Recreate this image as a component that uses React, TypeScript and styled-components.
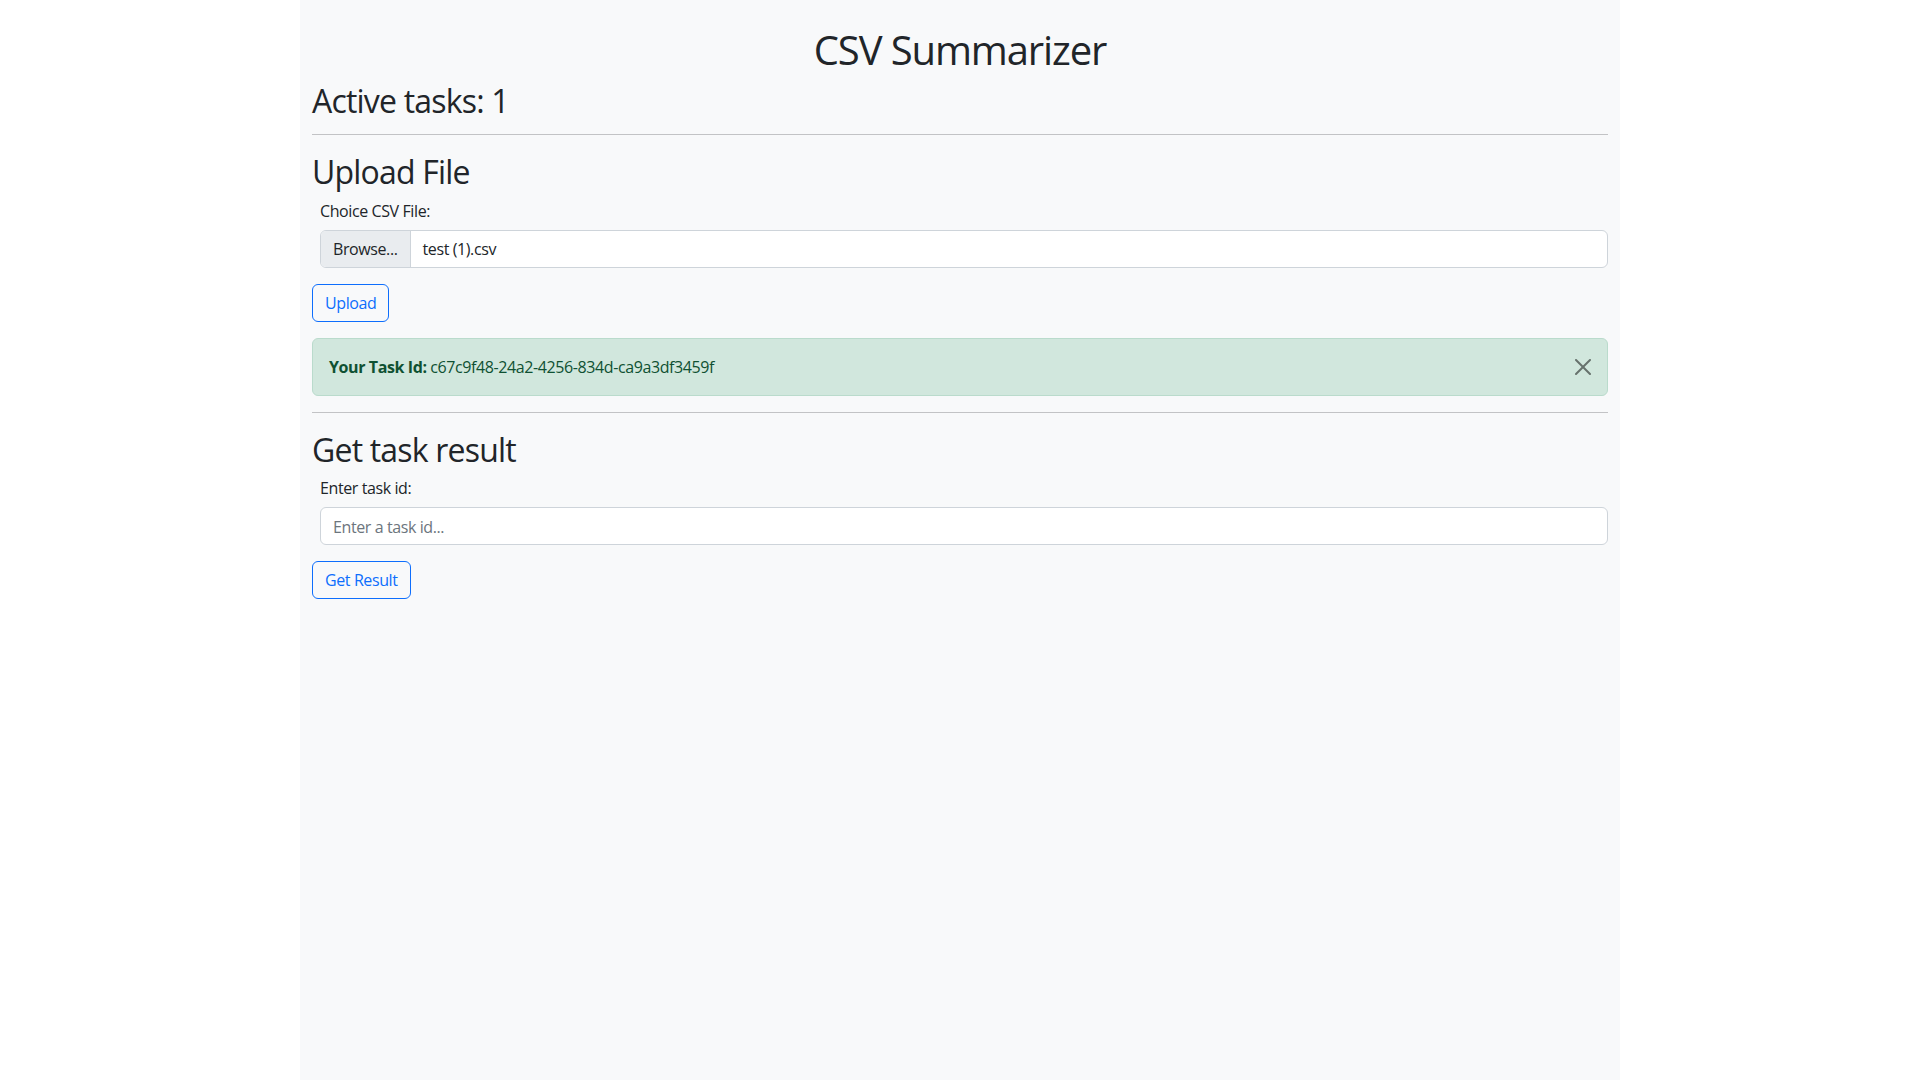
import styled, { createGlobalStyle } from 'styled-components';
import { useState } from 'react';

const GlobalStyle = createGlobalStyle`
  *, *::before, *::after {
    box-sizing: border-box;
  }

  body {
    margin: 0;
    background: #ffffff;
    color: #212529;
    font-family: "Open Sans", "Noto Sans", sans-serif;
    font-size: 16px;
    line-height: 1.5;
    letter-spacing: -0.025em;
  }
`;

const Container = styled.main`
  width: 1320px;
  min-height: 100vh;
  margin: 0 auto;
  padding: 24px 12px 0;
  background: #f8f9fa;
`;

const Title = styled.h1`
  margin: 0 0 8px;
  padding-top: 4px;
  font-size: 40px;
  font-weight: 400;
  line-height: calc(1.2em - 4px);
  letter-spacing: -0.028em;
  text-align: center;
`;

const SectionTitle = styled.h2<{ flush?: boolean }>`
  margin: 0 0 ${props => (props.flush ? '0' : '8px')};
  padding-top: 3px;
  font-size: 32px;
  font-weight: 400;
  line-height: calc(1.2em - 3px);
  letter-spacing: -0.025em;
`;

const Divider = styled.hr`
  margin: 16px 0;
  border: 0;
  border-top: 1px solid #212529;
  opacity: 0.25;
`;

const Field = styled.div`
  margin-left: 8px;
`;

const Label = styled.label`
  display: block;
  padding-top: 1px;
  margin-bottom: 7px;
`;

const TextInput = styled.input`
  display: block;
  width: 100%;
  height: 38px;
  padding: 7px 12px 5px;
  font: inherit;
  letter-spacing: inherit;
  color: #212529;
  background: #ffffff;
  border: 1px solid #ced4da;
  border-radius: 6px;
  outline: none;

  &::placeholder {
    color: #6c757d;
  }
`;

const FileField = styled.div`
  display: flex;
  align-items: stretch;
  height: 38px;
  background: #ffffff;
  border: 1px solid #ced4da;
  border-radius: 6px;
  overflow: hidden;
`;

const BrowseButton = styled.span`
  display: flex;
  align-items: center;
  padding: 0 12px;
  margin-right: 12px;
  background: #e9ecef;
  border-right: 1px solid #ced4da;
  color: #212529;
`;

const FileName = styled.span`
  display: flex;
  align-items: center;
`;

const OutlineButton = styled.button`
  display: inline-block;
  margin: 16px 0;
  padding: 6px 12px;
  font: inherit;
  letter-spacing: inherit;
  line-height: 24px;
  color: #0d6efd;
  background: transparent;
  border: 1px solid #0d6efd;
  border-radius: 6px;
  cursor: pointer;
`;

const Alert = styled.div`
  display: flex;
  align-items: center;
  justify-content: space-between;
  padding: 16px;
  margin-bottom: 16px;
  color: #0f5132;
  background: #d1e7dd;
  border: 1px solid #badbcc;
  border-radius: 6px;
`;

const CloseButton = styled.button`
  display: flex;
  width: 16px;
  height: 16px;
  padding: 0;
  border: 0;
  background: transparent;
  opacity: 0.5;
  cursor: pointer;
`;

function CloseIcon() {
  return (
    <svg width="16" height="16" viewBox="0 0 16 16" fill="#000">
      <path d="M.293.293a1 1 0 0 1 1.414 0L8 6.586 14.293.293a1 1 0 1 1 1.414 1.414L9.414 8l6.293 6.293a1 1 0 0 1-1.414 1.414L8 9.414l-6.293 6.293a1 1 0 0 1-1.414-1.414L6.586 8 .293 1.707a1 1 0 0 1 0-1.414z" />
    </svg>
  );
}

export default function App() {
  const [taskId, setTaskId] = useState('');
  const [showAlert, setShowAlert] = useState(true);

  return (
    <>
      <GlobalStyle />
      <Container>
        <Title>CSV Summarizer</Title>
        <SectionTitle flush>Active tasks: 1</SectionTitle>
        <Divider />

        <SectionTitle>Upload File</SectionTitle>
        <Field>
          <Label>Choice CSV File:</Label>
          <FileField>
            <BrowseButton>Browse...</BrowseButton>
            <FileName>test (1).csv</FileName>
          </FileField>
        </Field>
        <OutlineButton>Upload</OutlineButton>

        {showAlert && (
          <Alert>
            <span>
              <b>Your Task Id:</b> c67c9f48-24a2-4256-834d-ca9a3df3459f
            </span>
            <CloseButton aria-label="Close" onClick={() => setShowAlert(false)}>
              <CloseIcon />
            </CloseButton>
          </Alert>
        )}
        <Divider />

        <SectionTitle>Get task result</SectionTitle>
        <Field>
          <Label htmlFor="task-id">Enter task id:</Label>
          <TextInput
            id="task-id"
            placeholder="Enter a task id..."
            value={taskId}
            onChange={e => setTaskId(e.target.value)}
          />
        </Field>
        <OutlineButton>Get Result</OutlineButton>
      </Container>
    </>
  );
}
